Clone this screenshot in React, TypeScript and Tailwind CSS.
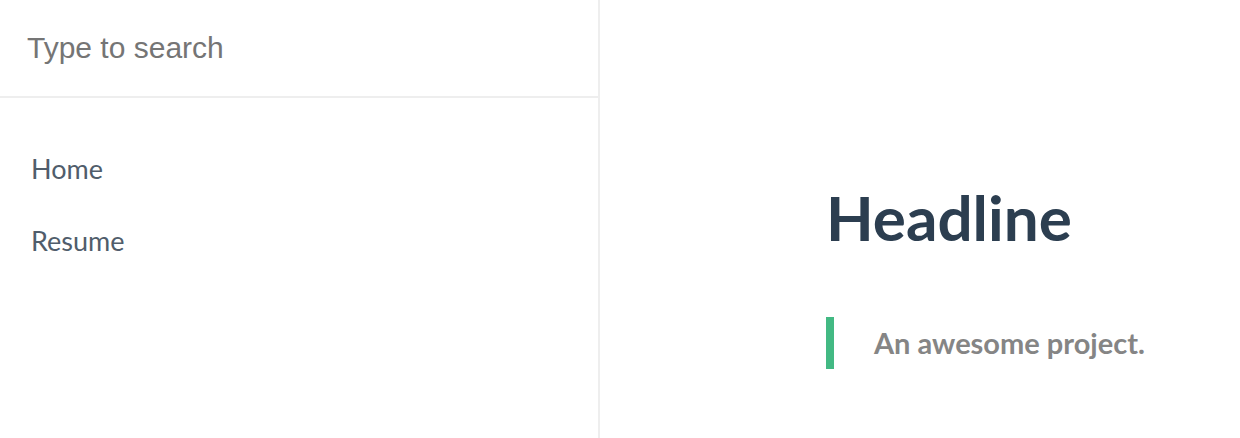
export default function App() {
  return (
    <div className="flex h-[438px] w-[1240px] overflow-hidden bg-white font-['Lato',sans-serif]">
      <aside className="flex h-full w-[600px] shrink-0 flex-col border-r-2 border-[#eee]">
        <div className="h-[98px] border-b-2 border-[#eee]">
          <input
            type="search"
            placeholder="Type to search"
            className="h-[96px] w-full px-[27px] font-['Liberation_Sans',sans-serif] text-[30px] text-[#333] outline-none placeholder:text-[#757575]"
          />
        </div>
        <ul className="flex flex-col gap-[32px] pt-[51px] pl-[31px]">
          <li className="text-[27px] leading-[40px] text-[#505d6b]">Home</li>
          <li className="text-[27px] leading-[40px] text-[#505d6b]">Resume</li>
        </ul>
      </aside>
      <main className="flex-1 pt-[186px] pl-[226px]">
        <h1 className="text-[62px] leading-[62px] font-bold text-[#2c3e50]">Headline</h1>
        <blockquote className="mt-[69px] flex h-[52px] w-fit border-l-8 border-[#42b983] pl-[40px]">
          <p className="text-[29px] leading-[52px] font-bold text-[#858585]">An awesome project.</p>
        </blockquote>
      </main>
    </div>
  );
}
